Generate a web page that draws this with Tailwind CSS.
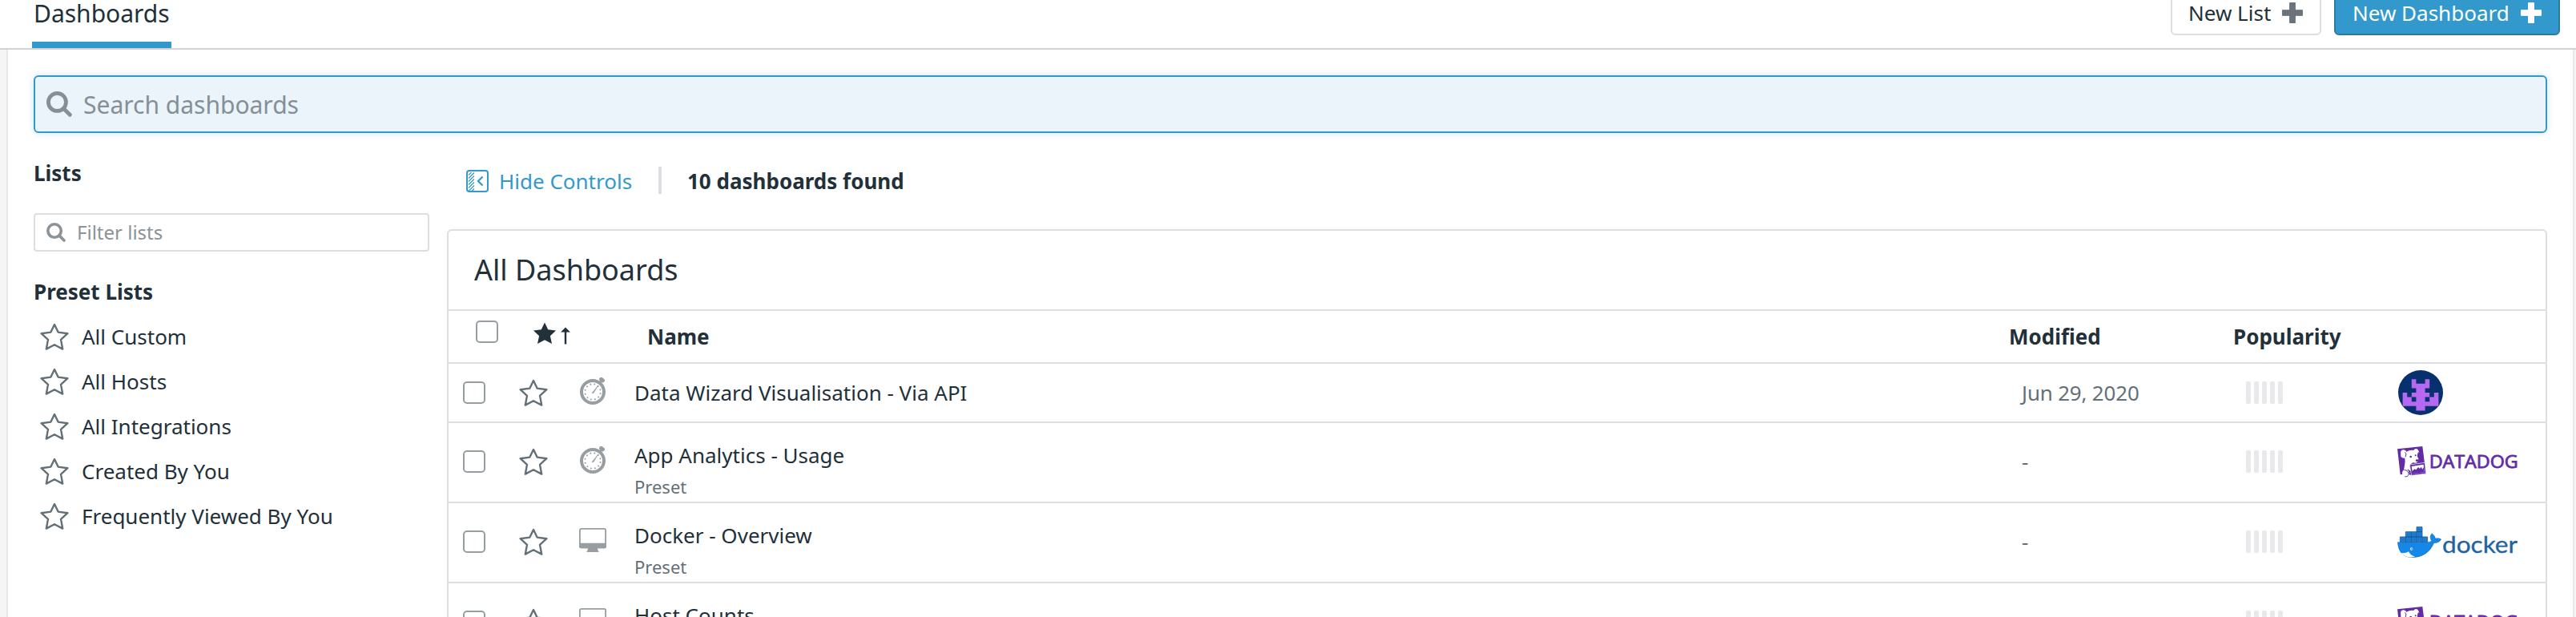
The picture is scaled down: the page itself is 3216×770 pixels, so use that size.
<!DOCTYPE html>
<html lang="en">
<head>
<meta charset="utf-8">
<title>Dashboards</title>
<script src="https://cdn.jsdelivr.net/npm/@tailwindcss/browser@4"></script>
</head>
<body class="h-[770px] w-[3216px] overflow-hidden bg-[#f5f5f5] font-['Noto_Sans',sans-serif] text-[26px] leading-[40px] text-[#22303a]">
<svg class="hidden" aria-hidden="true">
  <symbol id="search" viewBox="0 0 32 32"><g fill="none" stroke="currentColor" stroke-width="4.8"><circle cx="13.4" cy="13.4" r="11"/><path d="M21.5 21.5 29.3 29.3" stroke-linecap="round"/></g></symbol>
  <symbol id="star" viewBox="0 0 36 34"><path d="M18 2 22.6 11.6 34.4 13.2 26 20.8 28.2 32.6 18 27.2 7.8 32.6 10 20.8 1.6 13.2 13.4 11.6Z" fill="none" stroke="currentColor" stroke-width="2.4" stroke-linejoin="round"/></symbol>
  <symbol id="plus" viewBox="0 0 26 26"><path d="M9.600 .5h6.800v25h-6.800ZM.5 9.700h25v6.600h-25Z" fill="currentColor" stroke="currentColor" stroke-linejoin="round"/></symbol>
  <symbol id="clock" viewBox="0 0 36 38">
    <circle cx="18" cy="18" r="14" fill="none" stroke="currentColor" stroke-width="4"/>
    <circle cx="18" cy="18" r="9.7" fill="none" stroke="currentColor" stroke-width="2" stroke-linecap="round" stroke-dasharray="0.01 5.069" transform="rotate(12 18 18)"/>
    <path d="M16.900 19.800 25 9.800 19 19.400Z" fill="currentColor" stroke="currentColor" stroke-width=".6"/>
    <rect x="26" y="0.600" width="7.200" height="5" rx="2" transform="rotate(42 29.600 3)" fill="currentColor"/>
    <path d="M27 6.500 29 4" stroke="currentColor" stroke-width="3"/>
  </symbol>
  <symbol id="monitor" viewBox="0 0 36 38">
    <rect x="1.900" y="2.900" width="32.200" height="23.500" rx="2" fill="none" stroke="currentColor" stroke-width="1.800"/>
    <path d="M1 20.700H35V25q0 2.200-2.200 2.200H24q0 2.800 1.500 3.800V32H10.500V31Q12 30 12 27.200H3.200Q1 27.200 1 25Z" fill="currentColor"/>
  </symbol>
  <symbol id="datadog" viewBox="0 0 450 117">
    <path d="M0 10 94 0 107 103 54 109 36 103 11 106Z" fill="#632ca6"/>
    <path d="M12 20Q18 9 30 15L34 20Q48 12 60 15L66 10Q76 6 80 18L82 24 78 21 76 28Q72 38 79 46L78 56 70 62 58 61 47 69 49 92 40 86Q34 92 24 88L27 72Q30 58 28 44Q18 46 13 38Z" fill="#fff"/>
    <path d="M29 22Q36 28 30 40" fill="none" stroke="#632ca6" stroke-width="3"/>
    <circle cx="50" cy="39" r="4" fill="#632ca6"/><circle cx="68" cy="34" r="3" fill="#632ca6"/><ellipse cx="74" cy="53" rx="6" ry="4" fill="#632ca6"/>
    <circle cx="31" cy="100" r="13" fill="#fff"/><path d="M26 88Q44 92 42 106 38 116 28 113" fill="none" stroke="#632ca6" stroke-width="3"/>
    <path d="M46 69 103 61 107 102 53 109Z" fill="#632ca6" stroke="#fff" stroke-width="2"/><path d="M53 75 98 68 101 97 58 102Z" fill="#fff"/><path d="M55 94 64 85 70 88 78 78 84 84 89 77 94 86 98 78 101 97 58 102Z" fill="#632ca6"/>
    <text x="119" y="82" font-family="Open Sans, sans-serif" font-weight="400" font-size="67" textLength="333" lengthAdjust="spacingAndGlyphs" fill="#632ca6" stroke="#632ca6" stroke-width="2.500">DATADOG</text>
  </symbol>
  <symbol id="docker" viewBox="0 0 450 120">
    <path d="M1 59H112Q122 60 128 53 118 40 129 26 141 34 142 45 154 42 164 48 157 62 137 62 113 117 52 116 5 114 1 59Z" fill="#1488e8" stroke="#1b5f9e" stroke-width="1.500"/>
    <path d="M12 99Q30 102 42 94 48 108 66 113 32 121 12 99Z" fill="#fff"/>
    <circle cx="53" cy="84" r="5" fill="#fff"/><circle cx="54" cy="84" r="2.500" fill="#223"/>
    <path d="M10 39H113V58H10ZM31 20H93V39H31ZM72 2H93V20H72ZM31 39V58M52 20V58M72 20V58M93 39V58" fill="#1f83d8" stroke="#1a5793" stroke-width="2.500"/>
    <path d="M17 44V54M24 44V54M38 44V54M45 44V54M59 44V54M66 44V54M79 44V54M86 44V54M100 44V54M107 44V54M38 25V35M45 25V35M59 25V35M66 25V35M79 25V35M86 25V35M79 7V16M86 7V16" stroke="#1a65ad" stroke-width="2"/>
    <text x="168" y="100" font-family="Lato, sans-serif" font-size="88" textLength="282" lengthAdjust="spacingAndGlyphs" fill="#1f63a0" stroke="#1f63a0" stroke-width="1" stroke-linejoin="round">docker</text>
  </symbol>
</svg>

<header class="flex h-[62px] items-start justify-between border-b-2 border-[#d2d2d4] bg-white pr-[20px] pl-[40px]">
  <div class="h-[60px] w-[174px] border-b-8 border-[#3399cc] pt-px pl-[2px] text-[30px] leading-[32px]">Dashboards</div>
  <div class="flex gap-4">
    <button class="-mt-2.5 flex h-[54px] w-[188px] items-center rounded-md border-2 border-[#dddde2] bg-white pl-[20px]"><span class="w-[117px] pb-[3px] text-left whitespace-nowrap">New List</span><svg class="-mt-[2px] size-[26px] text-[#6b747c]"><use href="#plus"/></svg></button>
    <button class="-mt-2.5 flex h-[54px] w-[282px] items-center rounded-md border-2 border-[#2a7aa6] bg-[#3399cc] pl-[21px] text-white"><span class="w-[210px] pb-[3px] text-left whitespace-nowrap">New Dashboard</span><svg class="-mt-[2px] size-[26px]"><use href="#plus"/></svg></button>
  </div>
</header>

<main class="mr-[2px] ml-[8px] h-[708px] border-x-2 border-[#e7e7e9] bg-white pt-8 pr-8 pl-8">
  <div class="flex h-[72px] items-center rounded-md border-2 border-[#3399cc] bg-[#ebf4fb] pl-[14px] text-[30px] text-[#848f97] shadow-[0_0_8px_rgba(51,153,204,0.25)]">
    <svg class="mr-[14px] size-8"><use href="#search"/></svg><span class="pt-[2px]">Search dashboards</span>
  </div>
  <div class="flex">
    <aside class="w-[494px] shrink-0 pt-[30px]">
      <h2 class="font-bold">Lists</h2>
      <div class="mt-[30px] flex h-12 items-center rounded-sm border-2 border-[#dddde2] pl-[14px] text-[24px] text-[#8b9399]">
        <svg class="mr-[14px] size-6"><use href="#search"/></svg><span>Filter lists</span>
      </div>
      <h2 class="mt-[30px] font-bold">Preset Lists</h2>
      <ul class="mt-2 [&>li]:flex [&>li]:h-14 [&>li]:items-center [&>li]:gap-4 [&>li]:pl-2">
        <li><svg class="h-[34px] w-9 text-[#647078]"><use href="#star"/></svg>All Custom</li>
        <li><svg class="h-[34px] w-9 text-[#647078]"><use href="#star"/></svg>All Hosts</li>
        <li><svg class="h-[34px] w-9 text-[#647078]"><use href="#star"/></svg>All Integrations</li>
        <li><svg class="h-[34px] w-9 text-[#647078]"><use href="#star"/></svg>Created By You</li>
        <li><svg class="h-[34px] w-9 text-[#647078]"><use href="#star"/></svg>Frequently Viewed By You</li>
      </ul>
    </aside>

    <section class="ml-[22px] grow">
      <div class="flex h-[120px] items-start pt-[40px] pl-6">
        <svg class="mt-[6px] mr-[13px] size-7 text-[#3399cc]" viewBox="0 0 28 28" fill="none" stroke="currentColor">
          <rect x="1" y="1" width="26" height="26" rx="3" stroke-width="2"/>
          <path d="M3 6.500 6.500 3M3 10.500 10 3.500M3 14.500 10 7.500M3 18.500 10 11.500M3 22.500 10 15.500M3.500 26 10 19.500M7 26.500 10 23.500" stroke-width="1.100"/>
          <path d="M20.500 8.500 15 14 20.500 19.500" stroke-width="2.200"/>
        </svg>
        <span class="w-[199px] text-[#3399cc]">Hide Controls</span>
        <span class="mt-[2px] mr-8 h-[34px] w-1 bg-[#dddde2]"></span>
        <span class="font-bold">10 dashboards found</span>
      </div>

      <div class="h-[500px] overflow-hidden rounded-t-md border-2 border-b-0 border-[#dddde2] [&>div]:border-b-2 [&>div]:border-[#dddde2]">
        <div class="flex h-[100px] items-center pl-8 text-[36px]">All Dashboards</div>
        <div class="grid h-[66px] grid-cols-[72px_142px_1700px_280px_1fr] pt-3 pl-[34px] font-bold">
          <span class="size-7 rounded-[5px] border-2 border-[#979ea2]"></span>
          <span class="flex gap-[6px] pt-[2px]">
            <svg class="h-7 w-7" viewBox="0 0 28 28"><path d="M14 .5 18.200 9.300 28 10.500 20.900 17.200 23 27 14 22.200 5 27 7.100 17.200 0 10.500 9.800 9.300Z" fill="currentColor"/></svg>
            <svg class="mt-[6px] h-[22px] w-3" viewBox="0 0 12 22"><path d="M0 6.500 6 .5 12 6.500H7.200V21.500H4.800V6.500Z" fill="currentColor"/></svg>
          </span>
          <span>Name</span><span>Modified</span><span>Popularity</span>
        </div>

        <div class="grid h-[74px] grid-cols-[70px_74px_70px_1732px_280px_189px_1fr] items-center pl-[18px]">
          <span class="size-7 rounded-[5px] border-2 border-[#979ea2]"></span>
          <svg class="h-[34px] w-9 text-[#647078]"><use href="#star"/></svg>
          <svg class="h-[38px] w-9 text-[#979ea2]"><use href="#clock"/></svg>
          <span>Data Wizard Visualisation - Via API</span>
          <span class="tracking-[-0.2px] text-[#647078]">Jun 29, 2020</span>
          <span class="flex gap-1 [&>i]:h-7 [&>i]:w-1.5 [&>i]:rounded-[2px] [&>i]:bg-[#e9e9eb]"><i></i><i></i><i></i><i></i><i></i></span>
          <svg class="ml-px size-14" viewBox="0 0 10 10"><circle cx="5" cy="5" r="5" fill="#06306e"/><path d="M3 2H4V3H6V2H7V4H6V5H7V6H8V5H9V8H6V9H4V8H1V5H2V6H3V5H4V4H3ZM3 6V7H4V6ZM6 6V7H7V6Z" fill="#b669f0" fill-rule="evenodd"/></svg>
        </div>

        <div class="grid h-[100px] grid-cols-[70px_74px_70px_1732px_280px_189px_1fr] items-center pb-[2px] pl-[18px]">
          <span class="size-7 rounded-[5px] border-2 border-[#979ea2]"></span>
          <svg class="h-[34px] w-9 text-[#647078]"><use href="#star"/></svg>
          <svg class="h-[38px] w-9 text-[#979ea2]"><use href="#clock"/></svg>
          <span class="flex flex-col self-start pt-5">App Analytics - Usage<small class="mt-[2px] text-[22px] leading-[34px] text-[#647078]">Preset</small></span>
          <span class="text-[#647078]">-</span>
          <span class="flex gap-1 [&>i]:h-7 [&>i]:w-1.5 [&>i]:rounded-[2px] [&>i]:bg-[#e9e9eb]"><i></i><i></i><i></i><i></i><i></i></span>
          <svg class="mt-px h-[39px] w-[150px]"><use href="#datadog"/></svg>
        </div>

        <div class="grid h-[100px] grid-cols-[70px_74px_70px_1732px_280px_189px_1fr] items-center pb-[2px] pl-[18px]">
          <span class="size-7 rounded-[5px] border-2 border-[#979ea2]"></span>
          <svg class="h-[34px] w-9 text-[#647078]"><use href="#star"/></svg>
          <svg class="h-[38px] w-9 text-[#979ea2]"><use href="#monitor"/></svg>
          <span class="flex flex-col self-start pt-5">Docker - Overview<small class="mt-[2px] text-[22px] leading-[34px] text-[#647078]">Preset</small></span>
          <span class="text-[#647078]">-</span>
          <span class="flex gap-1 [&>i]:h-7 [&>i]:w-1.5 [&>i]:rounded-[2px] [&>i]:bg-[#e9e9eb]"><i></i><i></i><i></i><i></i><i></i></span>
          <svg class="mt-[2px] h-10 w-[150px]"><use href="#docker"/></svg>
        </div>

        <div class="grid h-[100px] grid-cols-[70px_74px_70px_1732px_280px_189px_1fr] items-center pb-[2px] pl-[18px]">
          <span class="size-7 rounded-[5px] border-2 border-[#979ea2]"></span>
          <svg class="h-[34px] w-9 text-[#647078]"><use href="#star"/></svg>
          <svg class="h-[38px] w-9 text-[#979ea2]"><use href="#monitor"/></svg>
          <span class="flex flex-col self-start pt-5">Host Counts</span>
          <span></span>
          <span class="flex gap-1 [&>i]:h-7 [&>i]:w-1.5 [&>i]:rounded-[2px] [&>i]:bg-[#e9e9eb]"><i></i><i></i><i></i><i></i><i></i></span>
          <svg class="mt-px h-[39px] w-[150px]"><use href="#datadog"/></svg>
        </div>
      </div>
    </section>
  </div>
</main>
</body>
</html>
